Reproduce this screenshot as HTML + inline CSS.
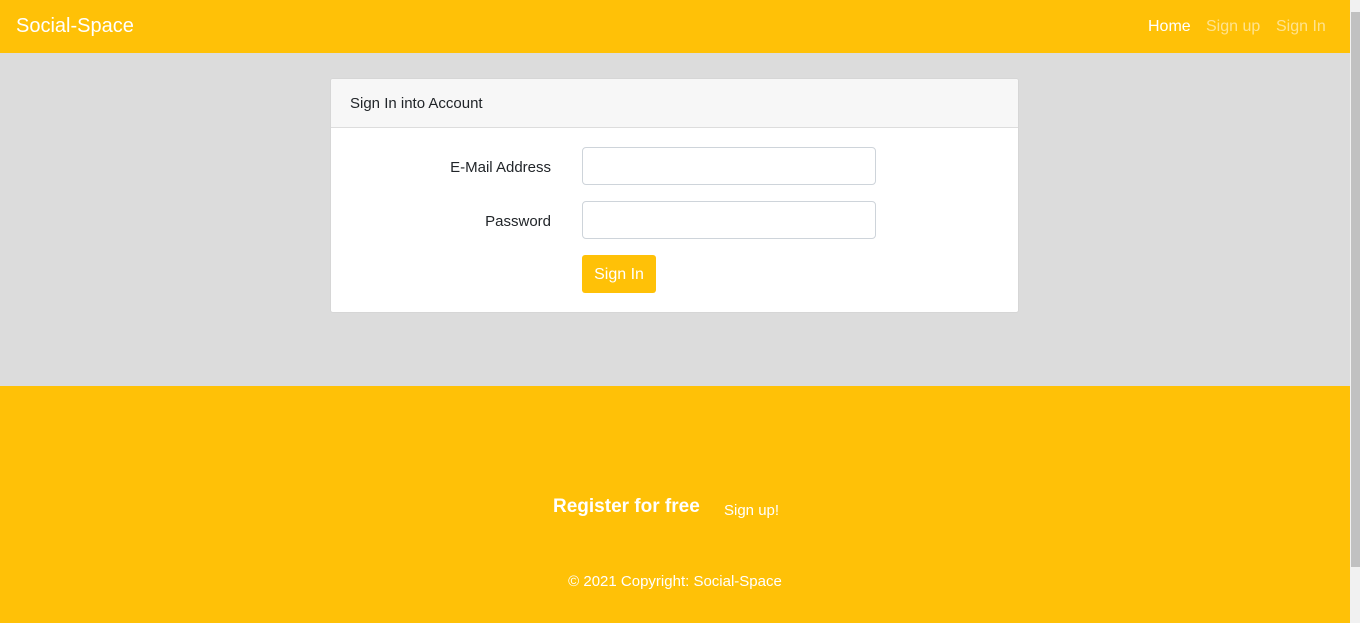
<!DOCTYPE html>
<html><head><style>
*{box-sizing:border-box;margin:0;padding:0}
body{width:1360px;height:623px;overflow:hidden;font-family:"Liberation Sans",sans-serif;background:#dcdcdc;position:relative}
.nav{position:absolute;left:0;top:0;width:1350px;height:53px;background:#ffc107}
.brand{position:absolute;left:16px;top:15px;font-size:20px;color:#fff}
.nl{position:absolute;top:18px;font-size:16px;color:rgba(255,255,255,.55)}
.card{position:absolute;left:330px;top:78px;width:689px;height:235px;background:#fff;border:1px solid #d6d6d6;border-radius:3px;overflow:hidden}
.ch{height:49px;background:#f7f7f7;border-bottom:1px solid #ddd;padding:16px 19px;font-size:15px;color:#212529}
.lbl{position:absolute;right:467px;font-size:15px;color:#212529}
.inp{position:absolute;left:251px;width:294px;height:38px;border:1px solid #ced4da;border-radius:4px}
.btn{position:absolute;left:251px;top:176px;width:74px;height:38px;background:#ffc107;border-radius:3px;color:#fff;font-size:16px;text-align:center;line-height:40px}
.foot{position:absolute;left:0;top:386px;width:1350px;height:237px;background:#ffc107;color:#fff}
.sb{position:absolute;left:1350px;top:0;width:10px;height:623px;background:#f1f1f1}
.th{position:absolute;left:1351px;top:12px;width:9px;height:555px;background:#c1c1c1}
</style></head><body>
<div class="nav">
<div class="brand">Social-Space</div>
<div class="nl" style="left:1148px;color:#fff">Home</div>
<div class="nl" style="left:1206px">Sign up</div>
<div class="nl" style="left:1276px">Sign In</div>
</div>
<div class="card">
<div class="ch">Sign In into Account</div>
<div class="lbl" style="top:80px">E-Mail Address</div>
<div class="inp" style="top:68px"></div>
<div class="lbl" style="top:134px">Password</div>
<div class="inp" style="top:122px"></div>
<div class="btn">Sign In</div>
</div>
<div class="foot">
<div style="position:absolute;left:553px;top:110px;font-size:19px;font-weight:bold">Register for free</div>
<div style="position:absolute;left:724px;top:116px;font-size:15px">Sign up!</div>
<div style="position:absolute;left:0;width:1350px;top:187px;text-align:center;font-size:15px">© 2021 Copyright: Social-Space</div>
</div>
<div class="sb"></div><div class="th"></div>
</body></html>
